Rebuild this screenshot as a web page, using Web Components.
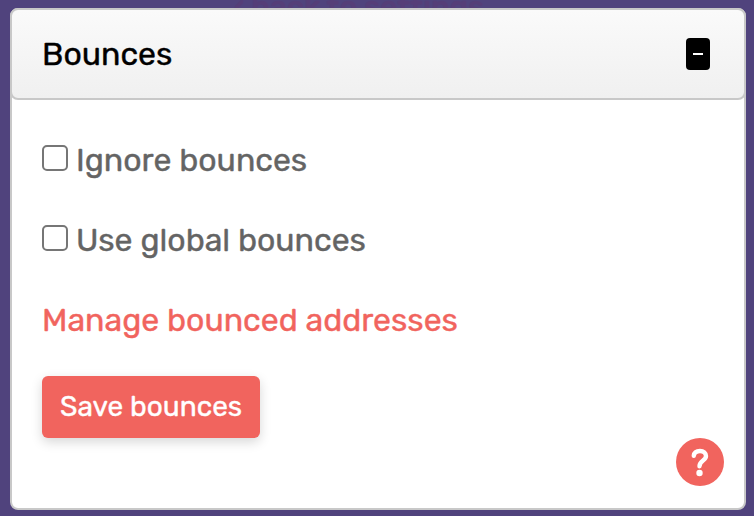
<!DOCTYPE html>
<html lang="en">
<head>
<meta charset="utf-8">
<title>Bounces</title>
<style>
html, body { margin: 0; min-height: 100%; }
body { background: #50437d; font-family: Rubik, Roboto, "Liberation Sans", sans-serif; font-weight: 400; -webkit-text-stroke: 0.4px; }
</style>
</head>
<body>
<settings-page>
  <settings-panel heading="Bounces">
    <check-option label="Ignore bounces"></check-option>
    <check-option label="Use global bounces"></check-option>
    <action-link href="#bounced">Manage bounced addresses</action-link>
    <action-button>Save bounces</action-button>
    <help-button slot="help"></help-button>
  </settings-panel>
</settings-page>
<script>
function define(name, html, setup) {
  const template = document.createElement('template');
  template.innerHTML = html;
  customElements.define(name, class extends HTMLElement {
    constructor() {
      super();
      this.attachShadow({ mode: 'open' }).append(template.content.cloneNode(true));
    }
    connectedCallback() { if (setup) setup(this, this.shadowRoot); }
  });
}

define('settings-page', `
<style>
:host { box-sizing: border-box; position: relative; display: flex; flex-direction: column; min-height: 100vh; padding: 8px 8px 6px 10px; overflow: hidden; background: #50437d; }
.back { position: absolute; top: -8px; left: 234px; color: #553e78; font-size: 30px; line-height: 30px; font-weight: 500; text-decoration: none; white-space: nowrap; }
::slotted(settings-panel) { flex: 1; position: relative; }
</style>
<a class="back" href="#settings">‹ back to settings</a>
<slot></slot>`);

define('settings-panel', `
<style>
:host { box-sizing: border-box; display: flex; flex-direction: column; border: 2px solid #c8c8c8; border-radius: 8px; background: #fff; }
header { box-sizing: border-box; display: flex; align-items: center; justify-content: space-between; height: 92px; margin: -2px; padding: 0 34px 0 30px; border: 2px solid #c8c8c8; border-radius: 8px; background: linear-gradient(#fafafa, #f0f0f0); }
h2 { margin: 0; color: #000; font-size: 32px; line-height: 40px; font-weight: 400; }
header button { display: grid; place-items: center; width: 24px; height: 32px; padding: 0; border: 0; border-radius: 4px; background: #000; color: #fff; }
svg { display: block; width: 12px; height: 12px; }
.body { flex: 1; display: flex; flex-direction: column; align-items: flex-start; gap: 40px; padding: 42px 30px 20px; }
.help { position: absolute; right: 20px; bottom: 22px; }
.body[hidden] { display: none; }
</style>
<header>
  <h2></h2>
  <button type="button" aria-label="Collapse"><svg viewBox="0 0 12 12" aria-hidden="true"><path d="M1 6h10" stroke="currentColor" stroke-width="2"/></svg></button>
</header>
<div class="body"><slot></slot></div>
<div class="help"><slot name="help"></slot></div>`, (host, root) => {
  root.querySelector('h2').textContent = host.getAttribute('heading');
  const body = root.querySelector('.body');
  root.querySelector('button').onclick = () => { body.hidden = !body.hidden; };
});

define('check-option', `
<style>
:host { display: block; }
label { display: flex; align-items: center; gap: 8px; color: #646464; font-size: 32px; line-height: 40px; }
input { appearance: none; box-sizing: border-box; flex: none; width: 26px; height: 26px; margin: 0 0 4px; border: 2px solid #767676; border-radius: 5px; background: #fff; }
input:checked { background: #f1645e; border-color: #f1645e; }
</style>
<label><input type="checkbox"><span></span></label>`, (host, root) => {
  root.querySelector('span').textContent = host.getAttribute('label');
});

define('action-link', `
<style>
:host { display: block; }
a { display: block; color: #f1645e; font-size: 32px; line-height: 40px; text-decoration: none; }
</style>
<a><slot></slot></a>`, (host, root) => {
  root.querySelector('a').href = host.getAttribute('href');
});

define('action-button', `
<style>
:host { display: block; margin-top: -4px; }
button { display: block; padding: 14px 18px; border: 0; border-radius: 6px; background: #f1645e; box-shadow: 0 4px 12px rgba(0,0,0,.16); color: #fff; font: inherit; font-size: 28px; line-height: 34px; }
</style>
<button type="button"><slot></slot></button>`);

define('help-button', `
<style>
:host { display: block; }
button { display: grid; place-items: center; width: 48px; height: 48px; padding: 0; border: 0; border-radius: 50%; background: #f1645e; color: #fff; }
svg { display: block; width: 48px; height: 48px; }
</style>
<button type="button" aria-label="Help"><svg viewBox="0 0 48 48" aria-hidden="true"><path d="M17.8 17.8C18.2 14.6 20.8 13 24 13C27.6 13 30 15 30 18.1C30 22.8 23.6 22.4 23.5 28.2" fill="none" stroke="currentColor" stroke-width="4.4" stroke-linecap="round"/><circle cx="23.5" cy="35" r="3.2" fill="currentColor"/></svg></button>`);
</script>
</body>
</html>
